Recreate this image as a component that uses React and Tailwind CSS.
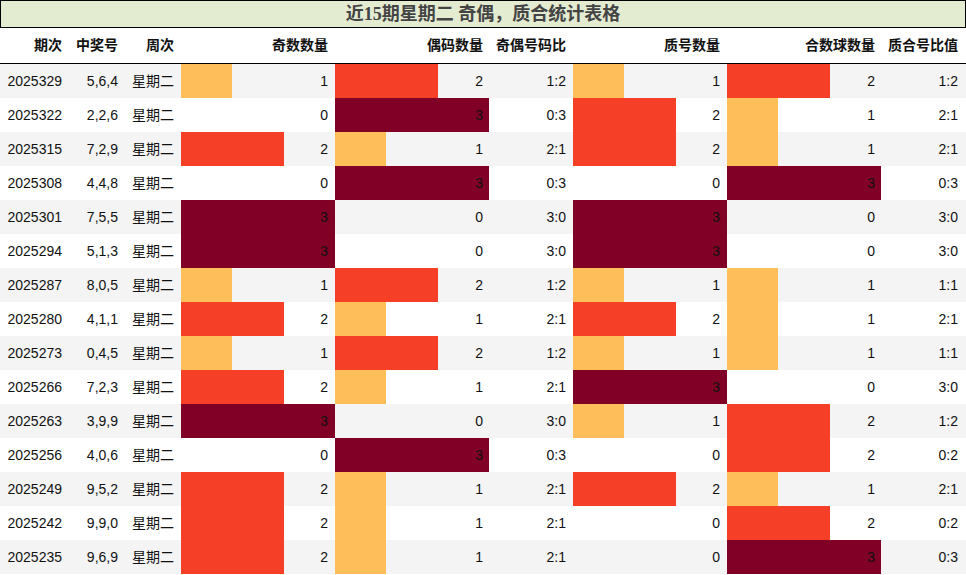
const rows = [
  ["2025329", "5,6,4", 1, 2, "1:2", 1, 2, "1:2"],
  ["2025322", "2,2,6", 0, 3, "0:3", 2, 1, "2:1"],
  ["2025315", "7,2,9", 2, 1, "2:1", 2, 1, "2:1"],
  ["2025308", "4,4,8", 0, 3, "0:3", 0, 3, "0:3"],
  ["2025301", "7,5,5", 3, 0, "3:0", 3, 0, "3:0"],
  ["2025294", "5,1,3", 3, 0, "3:0", 3, 0, "3:0"],
  ["2025287", "8,0,5", 1, 2, "1:2", 1, 1, "1:1"],
  ["2025280", "4,1,1", 2, 1, "2:1", 2, 1, "2:1"],
  ["2025273", "0,4,5", 1, 2, "1:2", 1, 1, "1:1"],
  ["2025266", "7,2,3", 2, 1, "2:1", 3, 0, "3:0"],
  ["2025263", "3,9,9", 3, 0, "3:0", 1, 2, "1:2"],
  ["2025256", "4,0,6", 0, 3, "0:3", 0, 2, "0:2"],
  ["2025249", "9,5,2", 2, 1, "2:1", 2, 1, "2:1"],
  ["2025242", "9,9,0", 2, 1, "2:1", 0, 2, "0:2"],
  ["2025235", "9,6,9", 2, 1, "2:1", 0, 3, "0:3"],
];

const barColor = {
  0: "bg-transparent",
  1: "bg-[#febe5a]",
  2: "bg-[#f53f27]",
  3: "bg-[#800026]",
};

const cols = "grid grid-cols-[65px_55px_61px_154px_154px_84px_154px_154px_85px]";

const BarCell = ({ value }) => (
  <div className="relative flex items-center justify-end pr-[7px] h-full">
    <div
      className={`absolute left-0 top-0 bottom-0 ${barColor[value]}`}
      style={{ width: `${(value / 3) * 154}px` }}
    />
    <span className="relative">{value}</span>
  </div>
);

const App = () => {
  return (
    <div
      className="w-[966px] h-[575px] bg-white text-[14px] text-[#111]"
      style={{ fontFamily: '"Liberation Sans", "Noto Sans CJK SC", sans-serif' }}
    >
      <div
        className="h-[28px] border border-black bg-[#e3ebd1] flex items-center justify-center text-[18px] font-bold text-[#444]"
        style={{ fontFamily: '"Liberation Serif", "Noto Sans CJK SC", serif' }}
      >
        近15期星期二 奇偶，质合统计表格
      </div>
      <div className={`${cols} h-[36px] border-b-[1.5px] border-black font-bold items-center text-right`}>
        <div className="pr-[3px]">期次</div>
        <div className="pr-[2px]">中奖号</div>
        <div className="pr-[7px]">周次</div>
        <div className="pr-[7px]">奇数数量</div>
        <div className="pr-[6px]">偶码数量</div>
        <div className="pr-[7px]">奇偶号码比</div>
        <div className="pr-[7px]">质号数量</div>
        <div className="pr-[6px]">合数球数量</div>
        <div className="pr-[8px]">质合号比值</div>
      </div>
      {rows.map((r, i) => (
        <div
          key={r[0]}
          className={`${cols} h-[34px] items-center text-right ${i % 2 === 0 ? "bg-[#f4f4f4]" : "bg-white"}`}
        >
          <div className="pr-[3px]">{r[0]}</div>
          <div className="pr-[2px]">{r[1]}</div>
          <div className="pr-[7px]">星期二</div>
          <BarCell value={r[2]} />
          <div className="h-full [&>div]:pr-[6px]">
            <BarCell value={r[3]} />
          </div>
          <div className="pr-[7px]">{r[4]}</div>
          <BarCell value={r[5]} />
          <div className="h-full [&>div]:pr-[6px]">
            <BarCell value={r[6]} />
          </div>
          <div className="pr-[8px]">{r[7]}</div>
        </div>
      ))}
    </div>
  );
};

export default App;
